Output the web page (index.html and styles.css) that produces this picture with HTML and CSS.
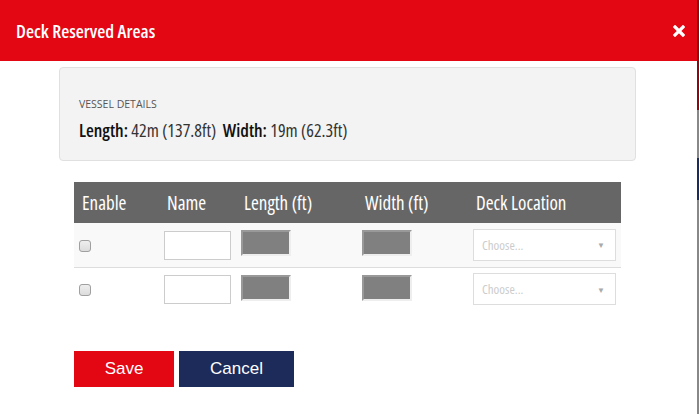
FILE: index.html
```html
<!DOCTYPE html>
<html lang="en">
<head>
    <meta charset="UTF-8">
    <title>Deck Reserved Areas</title>
    <link rel="stylesheet" href="styles.css">
</head>
<body>
    <div class="modal">
        <!-- Header -->
        <div class="modal-header">
            <h2>Deck Reserved Areas</h2>
            <svg class="close" width="12" height="12" viewBox="0 0 12 12">
                <path d="M2 2 L10 10 M10 2 L2 10" stroke="white" stroke-width="3.2" stroke-linecap="square"/>
            </svg>
        </div>

        <div class="modal-body">
            <!-- Vessel details -->
            <div class="vessel-box">
                <div class="vessel-label">VESSEL DETAILS</div>
                <div class="vessel-dims">
                    <strong>Length:</strong> 42m (137.8ft) &nbsp;<strong>Width:</strong> 19m (62.3ft)
                </div>
            </div>

            <!-- Areas table -->
            <table class="areas">
                <thead>
                    <tr>
                        <th class="col-enable">Enable</th>
                        <th class="col-name">Name</th>
                        <th class="col-length">Length (ft)</th>
                        <th class="col-width">Width (ft)</th>
                        <th class="col-deck">Deck Location</th>
                    </tr>
                </thead>
                <tbody>
                    <tr>
                        <td><input type="checkbox"></td>
                        <td><input type="text" class="name-input"></td>
                        <td><input type="text" class="dim-input" disabled></td>
                        <td><input type="text" class="dim-input" disabled></td>
                        <td><div class="choose">Choose... <span class="arrow">&#9660;</span></div></td>
                    </tr>
                    <tr>
                        <td><input type="checkbox"></td>
                        <td><input type="text" class="name-input"></td>
                        <td><input type="text" class="dim-input" disabled></td>
                        <td><input type="text" class="dim-input" disabled></td>
                        <td><div class="choose">Choose... <span class="arrow">&#9660;</span></div></td>
                    </tr>
                </tbody>
            </table>

            <!-- Buttons -->
            <div class="actions">
                <button class="btn btn-save">Save</button>
                <button class="btn btn-cancel">Cancel</button>
            </div>
        </div>
    </div>
</body>
</html>
```

FILE: styles.css
```css
/* Page behind the modal */
body {
    margin: 0;
    background: linear-gradient(#8a0a12 0, #8a0a12 110px, #888 110px, #888 158px, #1c2b5a 158px, #1c2b5a 200px, #888 200px);
    font-family: "Open Sans", sans-serif;
    font-stretch: 75%;
}

.modal {
    width: 697px;
    height: 414px;
    background-color: white;
}

/* Red header */
.modal-header {
    height: 61px;
    background-color: #e30613;
    color: white;
    display: flex;
    align-items: center;
    justify-content: space-between;
    padding: 0 12px 0 16px;
    box-sizing: border-box;
}

.modal-header h2 {
    margin: 0;
    font-size: 18.5px;
    font-weight: 600;
    font-stretch: 75%;
}

.close {
    display: block;
}

.modal-body {
    padding: 6px 0 0 59px;
}

/* Vessel details box */
.vessel-box {
    width: 577px;
    height: 94px;
    box-sizing: border-box;
    background-color: #f3f3f3;
    border: 1px solid #e0e0e0;
    border-radius: 4px;
    padding: 29px 19px 0 19px;
    color: #222;
}

.vessel-label {
    font-size: 10.5px;
    font-stretch: 90%;
    color: #555;
}

.vessel-dims {
    margin-top: 7px;
    font-size: 18px;
    font-stretch: 75%;
    color: #333;
}

.vessel-dims strong {
    color: #111;
    font-weight: 600;
}

/* Table */
.areas {
    margin: 21px 0 0 15px;
    width: 547px;
    border-collapse: collapse;
    table-layout: fixed;
}

.areas th {
    height: 41px;
    box-sizing: border-box;
    background-color: #666;
    color: white;
    font-size: 19px;
    font-stretch: 75%;
    font-weight: normal;
    text-align: left;
    padding: 1px 0 0 8px;
}

.col-enable { width: 85px; }
.col-name { width: 77px; }
.col-length { width: 121px; }
.col-width { width: 111px; }

.areas td {
    height: 44px;
    box-sizing: border-box;
    padding: 0 0 0 5px;
    border-bottom: 1px solid #ddd;
}

.areas tbody tr:first-child td {
    background-color: #f9f9f9;
}

.areas tbody tr:last-child td {
    border-bottom: none;
}

.areas input[type="checkbox"] {
    appearance: none;
    -webkit-appearance: none;
    display: block;
    width: 12px;
    height: 12px;
    margin: 2px 0 0 0;
    border: 1px solid #a0a0a0;
    border-radius: 3px;
    background: linear-gradient(#eee, #dcdcdc);
}

.name-input {
    display: block;
    width: 67px;
    height: 29px;
    box-sizing: border-box;
    border: 1px solid #ccc;
    margin: 1px 0 0 0;
}

.dim-input {
    display: block;
    width: 50px;
    height: 26px;
    box-sizing: border-box;
    background-color: #808080;
    border: 2px solid;
    border-color: #999 #eee #eee #999;
    margin: 0 0 3px 0;
}

.choose {
    width: 143px;
    height: 32px;
    box-sizing: border-box;
    border: 1px solid #ddd;
    background-color: white;
    color: #ccc;
    font-size: 13px;
    font-stretch: 75%;
    padding: 0 10px 0 8px;
    display: flex;
    align-items: center;
    justify-content: space-between;
}

.arrow {
    font-size: 8px;
    color: #aaa;
}

/* Buttons */
.actions {
    margin: 40px 0 0 15px;
    display: flex;
    gap: 5px;
}

.btn {
    height: 36px;
    border: none;
    color: white;
    font-family: "Liberation Sans", Arial, sans-serif;
    font-stretch: normal;
    font-size: 17px;
    padding: 0;
}

.btn-save {
    width: 100px;
    background-color: #e30613;
}

.btn-cancel {
    width: 115px;
    background-color: #1c2b5a;
}
```
